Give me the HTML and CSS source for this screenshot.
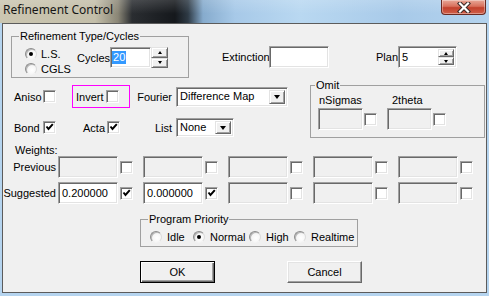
FILE: index.html
```html
<!DOCTYPE html>
<html>
<head>
<meta charset="utf-8">
<link rel="stylesheet" href="styles.css">
</head>
<body>
<div class="window">
  <div class="titlebar">
    <span class="title">Refinement Control</span>
    <div class="close">
      <svg width="14" height="11" viewBox="0 0 14 11"><path d="M3 1.5 L11 9.5 M11 1.5 L3 9.5" stroke="#3a2a28" stroke-width="4.2" stroke-linecap="square"/><path d="M3 1.5 L11 9.5 M11 1.5 L3 9.5" stroke="#ffffff" stroke-width="2.2" stroke-linecap="square"/></svg>
    </div>
  </div>
  <div class="client">
    <div class="row-a">
      <fieldset class="grp grp-type">
        <legend>Refinement Type/Cycles</legend>
        <div class="type-body">
          <div class="radio-col">
            <div class="opt"><span class="radio on"></span><span>L.S.</span></div>
            <div class="opt"><span class="radio"></span><span>CGLS</span></div>
          </div>
          <div class="field cycles">
            <span class="lbl">Cycles</span>
            <div class="edit cyc-edit"><span class="sel">20</span></div>
            <div class="spin ext-spin">
              <div class="raised sb"><span class="tri-up"></span></div>
              <div class="raised sb"><span class="tri-dn"></span></div>
            </div>
          </div>
        </div>
      </fieldset>
      <div class="field ext">
        <span class="lbl ext-lbl">Extinction</span>
        <div class="edit ext-edit"></div>
      </div>
      <div class="field plan">
        <span class="lbl plan-lbl">Plan</span>
        <div class="edit plan-edit">
          <span class="etext">5</span>
          <div class="spin in-spin">
            <div class="raised sb"><span class="tri-up"></span></div>
            <div class="raised sb"><span class="tri-dn"></span></div>
          </div>
        </div>
      </div>
    </div>

    <div class="row-b">
      <div class="opts-grid">
        <div class="cell c1"><span class="lbl w29">Aniso</span><span class="chk"></span></div>
        <div class="cell pink"><span class="lbl w30">Invert</span><span class="chk"></span></div>
        <div class="cell c3">Fourier</div>
        <div class="combo combo-fourier"><span class="ctext">Difference Map</span><span class="raised drop"><span class="tri-drop"></span></span></div>
        <div class="cell c1"><span class="lbl w29">Bond</span><span class="chk"><svg width="9" height="9" viewBox="0 0 9 9"><path d="M1.5 3.5 L3.5 6 L7.8 1.2" fill="none" stroke="#000" stroke-width="2"/></svg></span></div>
        <div class="cell acta"><span class="lbl">Acta</span><span class="chk"><svg width="9" height="9" viewBox="0 0 9 9"><path d="M1.5 3.5 L3.5 6 L7.8 1.2" fill="none" stroke="#000" stroke-width="2"/></svg></span></div>
        <div class="cell c3">List</div>
        <div class="combo combo-list"><span class="ctext">None</span><span class="raised drop"><span class="tri-drop"></span></span></div>
      </div>
      <fieldset class="grp grp-omit">
        <legend>Omit</legend>
        <div class="omit-body">
          <div class="omit-col">
            <div class="olbl ol1">nSigmas</div>
            <div class="oedit"><div class="edit dis oe"></div><span class="chk"></span></div>
          </div>
          <div class="omit-col">
            <div class="olbl ol2">2theta</div>
            <div class="oedit"><div class="edit dis oe"></div><span class="chk"></span></div>
          </div>
        </div>
      </fieldset>
    </div>

    <div class="wlabel">Weights:</div>
    <div class="wrow">
      <span class="rl">Previous</span>
      <div class="wcol"><div class="edit dis we"></div><span class="chk"></span></div>
      <div class="wcol"><div class="edit dis we"></div><span class="chk"></span></div>
      <div class="wcol"><div class="edit dis we"></div><span class="chk"></span></div>
      <div class="wcol"><div class="edit dis we"></div><span class="chk"></span></div>
      <div class="wcol"><div class="edit dis we"></div><span class="chk"></span></div>
    </div>
    <div class="wrow sugg">
      <span class="rl">Suggested</span>
      <div class="wcol"><div class="edit we"><span class="etext">0.200000</span></div><span class="chk"><svg width="9" height="9" viewBox="0 0 9 9"><path d="M1.5 3.5 L3.5 6 L7.8 1.2" fill="none" stroke="#000" stroke-width="2"/></svg></span></div>
      <div class="wcol"><div class="edit we"><span class="etext">0.000000</span></div><span class="chk"><svg width="9" height="9" viewBox="0 0 9 9"><path d="M1.5 3.5 L3.5 6 L7.8 1.2" fill="none" stroke="#000" stroke-width="2"/></svg></span></div>
      <div class="wcol"><div class="edit dis we"></div><span class="chk"></span></div>
      <div class="wcol"><div class="edit dis we"></div><span class="chk"></span></div>
      <div class="wcol"><div class="edit dis we"></div><span class="chk"></span></div>
    </div>

    <fieldset class="grp grp-prio">
      <legend>Program Priority</legend>
      <div class="prio-body">
        <div class="popt p1"><span class="radio"></span><span>Idle</span></div>
        <div class="popt p2"><span class="radio on"></span><span>Normal</span></div>
        <div class="popt p3"><span class="radio"></span><span>High</span></div>
        <div class="popt p4"><span class="radio"></span><span>Realtime</span></div>
      </div>
    </fieldset>

    <div class="buttons">
      <div class="btn default"><span>OK</span></div>
      <div class="btn"><span>Cancel</span></div>
    </div>
  </div>
</div>
</body>
</html>
```

FILE: styles.css
```css
* { box-sizing: border-box; }

body {
  margin: 0;
  width: 489px;
  height: 296px;
  overflow: hidden;
  font-family: "Liberation Sans", Arial, sans-serif;
  font-size: 11px;
  color: #000;
}

.window {
  width: 489px;
  height: 296px;
  background: #b5d4ef;
}

.titlebar {
  height: 23px;
  display: flex;
  align-items: flex-start;
  padding-left: 3px;
  background:
    linear-gradient(to bottom, rgba(255,255,255,0.15), rgba(255,255,255,0) 60%),
    linear-gradient(to right, #cbc6b1 0px, #c3bea9 95px, #8a8676 118px, #2a2d31 132px, #15181c 175px, #2e3a45 188px, #86abcd 203px, #a7c9e8 235px, #b9d8f1 300px, #a8cae9 400px, #b4d3ee 489px);
}

.title {
  font-family: "Noto Sans", "Open Sans", sans-serif;
  font-size: 12px;
  line-height: 16px;
  padding-top: 2px;
  color: #151515;
}

.close {
  margin-left: auto;
  margin-right: 3px;
  width: 45px;
  height: 15px;
  border: 1px solid #6a2a22;
  border-top: none;
  border-radius: 0 0 4px 4px;
  background: linear-gradient(to bottom, #e8a898 0%, #d8705c 45%, #c2402c 55%, #d0604a 100%);
  display: flex;
  align-items: center;
  justify-content: center;
  box-shadow: inset 0 0 0 1px rgba(255,255,255,0.35);
}

.client {
  margin-left: 2px;
  width: 485px;
  height: 270px;
  border: 1px solid #5c5c5c;
  background: #f0f0f0;
}

/* ---------- generic controls ---------- */
.grp {
  margin: 0;
  padding: 0;
  min-width: 0;
  border: 1px solid #a0a0a0;
}
.grp legend {
  padding: 0 1px;
  margin-left: 7px;
  line-height: 12px;
  font-size: 11px;
}

.lbl { white-space: nowrap; }

.field { display: flex; align-items: center; }

.edit {
  border: 1px solid;
  border-color: #a0a0a0 #ffffff #ffffff #a0a0a0;
  box-shadow: inset 1px 1px 0 #696969, inset -1px -1px 0 #e3e3e3;
  background: #fff;
  height: 22px;
  display: flex;
  align-items: center;
  padding: 0 2px;
}
.edit.dis { background: #f0f0f0; }
.etext { line-height: 13px; padding-left: 1px; }

.chk {
  width: 13px;
  height: 13px;
  flex: none;
  border: 1px solid;
  border-color: #a0a0a0 #ffffff #ffffff #a0a0a0;
  box-shadow: inset 1px 1px 0 #696969, inset -1px -1px 0 #e3e3e3;
  background: #fff;
  display: flex;
  align-items: center;
  justify-content: center;
}
.chk svg { display: block; margin: 0 0 0 0; }

.raised {
  background: #f0f0f0;
  border: 1px solid;
  border-color: #e3e3e3 #696969 #696969 #e3e3e3;
  box-shadow: inset 1px 1px 0 #ffffff, inset -1px -1px 0 #a0a0a0;
}

.radio {
  width: 12px;
  height: 12px;
  flex: none;
  border-radius: 50%;
  border: 1px solid;
  border-color: #8c8c8c #dcdcdc #f4f4f4 #8c8c8c;
  background: radial-gradient(circle at 60% 60%, #ffffff 0, #f6f6f6 50%, #dedede 100%);
  box-shadow: inset 1px 1px 0 #b8b8b8;
  display: flex;
  align-items: center;
  justify-content: center;
}
.radio.on::after {
  content: "";
  width: 4px;
  height: 4px;
  border-radius: 50%;
  background: #000;
}

.spin { display: flex; flex-direction: column; flex: none; }
.sb { flex: 1; display: flex; align-items: center; justify-content: center; }
.tri-up, .tri-dn { width: 0; height: 0; border-left: 2.5px solid transparent; border-right: 2.5px solid transparent; }
.tri-up { border-bottom: 3px solid #000; }
.tri-dn { border-top: 3px solid #000; }

.combo {
  border: 1px solid;
  border-color: #a0a0a0 #ffffff #ffffff #a0a0a0;
  box-shadow: inset 1px 1px 0 #696969, inset -1px -1px 0 #e3e3e3;
  background: #fff;
  display: flex;
  align-items: stretch;
  padding: 2px;
}
.ctext { flex: 1; line-height: 13px; padding-left: 1px; display: flex; align-items: center; white-space: nowrap; overflow: hidden; }
.drop { width: 16px; flex: none; display: flex; align-items: center; justify-content: center; }
.tri-drop { width: 0; height: 0; border-left: 3.5px solid transparent; border-right: 3.5px solid transparent; border-top: 4px solid #000; }

/* ---------- row A ---------- */
.row-a { display: flex; align-items: flex-start; margin-top: 6px; }
.grp-type { margin-left: 8px; width: 178px; }
.type-body { display: flex; align-items: flex-start; padding-bottom: 1px; }
.radio-col { padding: 4px 0 0 13px; width: 65px; }
.opt { display: flex; align-items: center; gap: 4px; height: 15px; }
.cycles { margin-top: 5px; }
.cyc-edit { width: 41px; height: 21px; padding: 0 1px; }
.sel { background: #3399ff; color: #fff; line-height: 13px; padding: 0 1px; }
.ext-spin { width: 17px; height: 21px; }

.ext { margin-left: 33px; margin-top: 16px; }
.ext-lbl { width: 47px; }
.ext-edit { width: 60px; }

.plan { margin-left: 47px; margin-top: 16px; }
.plan-lbl { width: 22px; }
.plan-edit { width: 59px; padding: 2px 2px 2px 2px; align-items: stretch; }
.plan-edit .etext { flex: 1; display: flex; align-items: center; }
.in-spin { width: 16px; }

/* ---------- row B ---------- */
.row-b { display: flex; align-items: flex-start; margin-top: 1px; }
.opts-grid {
  width: 307px;
  margin-top: 6px;
  display: grid;
  grid-template-columns: 69px 58px 46px auto;
  grid-template-rows: 23px 19px;
  row-gap: 10px;
  align-items: center;
  justify-items: start;
}
.cell { display: flex; align-items: center; }
.c1 { padding-left: 11px; }
.w29 { width: 29px; }
.w30 { width: 30px; }
.pink { width: 58px; height: 23px; border: 1px solid #ff00ff; padding-left: 3px; }
.c3 { justify-self: stretch; justify-content: flex-end; padding-right: 4px; }
.acta { justify-self: stretch; justify-content: flex-end; padding-right: 10px; gap: 2px; }
.combo-fourier { width: 112px; height: 20px; }
.combo-list { width: 58px; height: 19px; }

.grp-omit { width: 175px; }
.grp-omit legend { margin-left: 4px; }
.omit-body { display: flex; padding: 3px 0 7px 7px; }
.omit-col { width: 69px; }
.olbl { line-height: 12px; }
.ol1 { margin-left: 1px; }
.ol2 { margin-left: 5px; }
.oedit { display: flex; align-items: center; margin-top: 2px; gap: 1px; }
.oe { width: 45px; height: 22px; }

/* ---------- weights ---------- */
.wlabel { margin: 6px 0 0 12px; line-height: 12px; }
.wrow { display: flex; align-items: center; height: 22px; }
.wrow.sugg { margin-top: 4px; }
.rl { width: 55px; text-align: right; padding-right: 2px; white-space: nowrap; }
.wcol { display: flex; align-items: center; gap: 2px; margin-right: 10px; }
.we { width: 60px; }

/* ---------- priority ---------- */
.grp-prio { margin: 9px 0 0 137px; width: 218px; }
.prio-body { display: flex; align-items: center; padding: 5px 0 3px 9px; }
.popt { display: flex; align-items: center; gap: 5px; height: 13px; }
.p1 { width: 43px; }
.p2 { width: 56px; }
.p3 { width: 45px; }

/* ---------- buttons ---------- */
.buttons { display: flex; gap: 72px; margin: 14px 0 0 137px; }
.btn {
  width: 75px;
  height: 22px;
  background: #f0f0f0;
  border: 1px solid;
  border-color: #ffffff #696969 #696969 #ffffff;
  box-shadow: inset -1px -1px 0 #a0a0a0, inset 1px 1px 0 #e3e3e3;
  display: flex;
  align-items: center;
  justify-content: center;
}
.btn.default {
  border: 1px solid #000;
  box-shadow: inset 1px 1px 0 #ffffff, inset -1px -1px 0 #696969, inset -2px -2px 0 #a0a0a0;
}
```
